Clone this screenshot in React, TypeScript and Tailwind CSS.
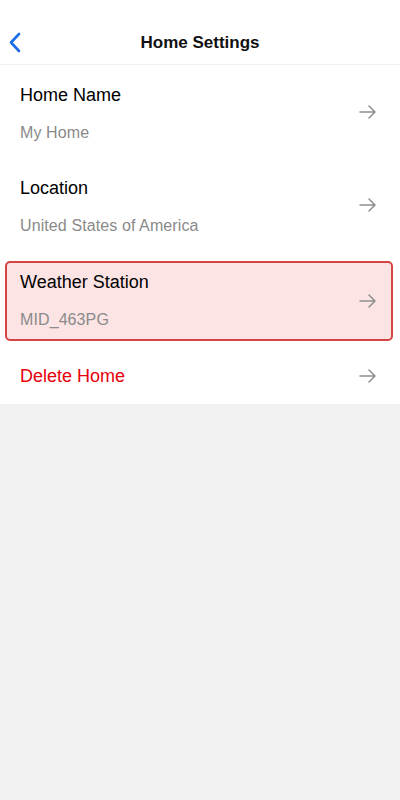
const font = { fontFamily: '"Liberation Sans", Arial, sans-serif' }

function Arrow() {
  return (
    <svg width="17" height="14" viewBox="0 0 17 14" fill="none" stroke="#8e8e8e" strokeWidth="1.5" strokeLinecap="round" strokeLinejoin="round">
      <path d="M1 7h15M10 1l6 6-6 6" />
    </svg>
  )
}

function Row({ title, value }: { title: string; value: string }) {
  return (
    <div className="flex items-center justify-between pl-5 pr-6">
      <div className="pt-[19px] pb-[15px]">
        <p className="text-[18px] leading-[22px] text-black">{title}</p>
        <p className="mt-[17px] text-[16px] leading-5 tracking-[0.1px] text-[#8a8a8a]">{value}</p>
      </div>
      <Arrow />
    </div>
  )
}

export default function App() {
  return (
    <div className="min-h-[800px] bg-[#f2f2f2]" style={font}>
      <div className="bg-white">
        <header className="relative flex h-[65px] items-center justify-center border-b border-[#f0f0f0] pt-[22px]">
          <button className="absolute left-[9px] top-[32px]">
            <svg width="12" height="21" viewBox="0 0 12 21" fill="none" stroke="#1a6fe6" strokeWidth="2.6" strokeLinecap="round" strokeLinejoin="round">
              <path d="M10 2L2 10.5 10 19" />
            </svg>
          </button>
          <h1 className="text-[17px] font-bold leading-[22px] text-[#111]">Home Settings</h1>
        </header>

        <Row title="Home Name" value="My Home" />
        <Row title="Location" value="United States of America" />

        <div className="ml-[5px] mr-[7px] mt-[10px] flex items-center justify-between rounded-[5px] border-2 border-[#d64545] bg-[#fde4e4] pl-[13px] pr-[15px]">
          <div className="pt-2 pb-[9px]">
            <p className="text-[18px] leading-[22px] text-black">Weather Station</p>
            <p className="mt-[17px] text-[16px] leading-5 tracking-[0.1px] text-[#8a8a8a]">MID_463PG</p>
          </div>
          <Arrow />
        </div>

        <div className="flex items-center justify-between pl-5 pr-6 pt-6 pb-[17px]">
          <p className="text-[18px] leading-[22px] text-[#e8000b]">Delete Home</p>
          <Arrow />
        </div>
      </div>
    </div>
  )
}
